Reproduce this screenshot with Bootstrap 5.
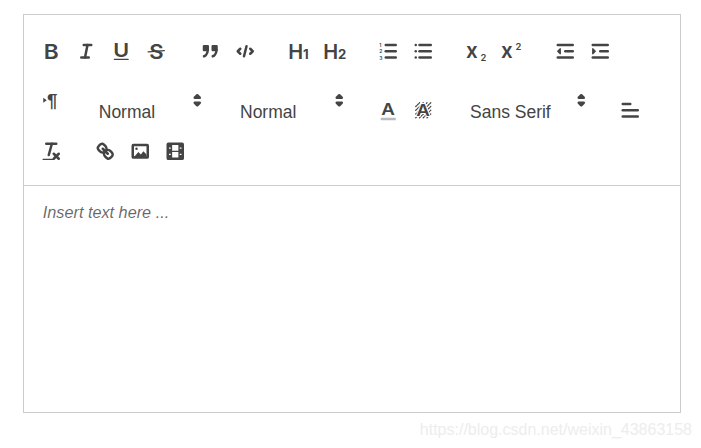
<!DOCTYPE html>
<html lang="en">

<head>
    <meta charset="UTF-8">
    <meta name="viewport" content="width=device-width, initial-scale=1.0">
    <title>Editor</title>
    <link rel="stylesheet" href="https://cdn.jsdelivr.net/npm/bootstrap@5.3.3/dist/css/bootstrap.min.css">
    <style>
        body { background: #fff; font-family: "Liberation Sans", Arial, sans-serif; color: #444; }
        .editor-box { margin: 14px 0 0 23px; width: 658px; border: 1px solid #ccc; }
        .tool-bar { padding: 11px 10px 9px; border-bottom: 1px solid #ccc; }
        .tool-group { height: 50px; margin-right: 18.75px; }
        .tool-btn { width: 35px; height: 30px; padding: 3.75px 6.25px; background: none; border: 0; overflow: visible; }
        .tool-btn svg { display: block; width: 22.5px; height: 22.5px; overflow: visible; }
        .tool-btn.up { margin-bottom: 2px; }
        .tool-btn.down { margin-top: 18px; }
        .tool-picker { width: 122.5px; height: 50px; font-size: 17.5px; padding: 0 1.5px 0 11px; }
        .tool-picker.wide { width: 135px; }
        .tool-picker span { margin-top: 25px; line-height: 22px; }
        .tool-picker svg { width: 22.5px; height: 22.5px; margin-top: 13px; }
        svg text { font-family: Inter, "Liberation Sans", sans-serif; font-weight: 600; fill: #444; }
        .ln { fill: none; stroke: #444; stroke-width: 2; stroke-linecap: round; stroke-linejoin: round; }
        .thin { stroke-width: 1; }
        .dark { fill: #444; }
        .halo { paint-order: stroke; stroke: #fff; stroke-width: 1.5px; }
        .editor-area { height: 226px; padding: 15px 18.75px; font-size: 16.25px; line-height: 23px; font-style: italic; color: rgba(0, 0, 0, .6); }
        .water-mark { width: 692px; margin-top: 8px; font-size: 16px; line-height: 18px; color: #ededed; }
    </style>
</head>

<body>
    <div class="editor-box">
        <div class="tool-bar d-flex flex-wrap">
            <div class="tool-group d-flex align-items-center">
                <button class="tool-btn"><svg viewBox="0 0 18 18"><text transform="translate(3 15) scale(1.1 1)" font-size="16.5">B</text></svg></button>
                <button class="tool-btn"><svg viewBox="0 0 18 18"><line class="ln" x1="7" x2="13" y1="4" y2="4"/><line class="ln" x1="5" x2="11" y1="14" y2="14"/><line class="ln" x1="8" x2="10" y1="14" y2="4"/></svg></button>
                <button class="tool-btn"><svg viewBox="0 0 18 18"><text transform="translate(2.6 13.6) scale(1.15 1)" font-size="15">U</text><rect class="dark" x="3" y="15" width="12" height="1" rx=".5"/></svg></button>
                <button class="tool-btn"><svg viewBox="0 0 18 18"><text transform="translate(3.4 15) scale(1.1 1)" font-size="16">S</text><line class="ln thin" x1="15.5" x2="2.5" y1="8.5" y2="9.5"/></svg></button>
            </div>
            <div class="tool-group d-flex align-items-center">
                <button class="tool-btn"><svg viewBox="0 0 18 18"><rect class="dark ln" x="4" y="5" width="3" height="3"/><rect class="dark ln" x="11" y="5" width="3" height="3"/><path class="ln" d="M7,8c0,4-3,5-3,5"/><path class="ln" d="M14,8c0,4-3,5-3,5"/></svg></button>
                <button class="tool-btn"><svg viewBox="0 0 18 18"><polyline class="ln" points="5 7 3 9 5 11"/><polyline class="ln" points="13 7 15 9 13 11"/><line class="ln" x1="10" x2="8" y1="5" y2="13"/></svg></button>
            </div>
            <div class="tool-group d-flex align-items-center">
                <button class="tool-btn"><svg viewBox="0 0 18 18"><text x=".1" y="15" font-size="16">H<tspan font-size="10.5" font-weight="700">1</tspan></text></svg></button>
                <button class="tool-btn"><svg viewBox="0 0 18 18"><text x=".1" y="15" font-size="16">H<tspan font-size="10.5" font-weight="700">2</tspan></text></svg></button>
            </div>
            <div class="tool-group d-flex align-items-center">
                <button class="tool-btn"><svg viewBox="0 0 18 18"><line class="ln" x1="7" x2="15" y1="4" y2="4"/><line class="ln" x1="7" x2="15" y1="9" y2="9"/><line class="ln" x1="7" x2="15" y1="14" y2="14"/><text x="1.8" y="5.6" font-size="4" font-weight="700">1</text><text x="1.8" y="10.6" font-size="4" font-weight="700">2</text><text x="1.8" y="15.6" font-size="4" font-weight="700">3</text></svg></button>
                <button class="tool-btn"><svg viewBox="0 0 18 18"><line class="ln" x1="6" x2="15" y1="4" y2="4"/><line class="ln" x1="6" x2="15" y1="9" y2="9"/><line class="ln" x1="6" x2="15" y1="14" y2="14"/><line class="ln" x1="3" x2="3" y1="4" y2="4"/><line class="ln" x1="3" x2="3" y1="9" y2="9"/><line class="ln" x1="3" x2="3" y1="14" y2="14"/></svg></button>
            </div>
            <div class="tool-group d-flex align-items-center">
                <button class="tool-btn"><svg viewBox="0 0 18 18"><text x=".8" y="14.6" font-size="16.5" font-weight="700">x</text><text x="12.4" y="16.6" font-size="7.5" font-weight="400">2</text></svg></button>
                <button class="tool-btn"><svg viewBox="0 0 18 18"><text x=".8" y="14.6" font-size="16.5" font-weight="700">x</text><text x="12.4" y="8" font-size="7.5" font-weight="400">2</text></svg></button>
            </div>
            <div class="tool-group d-flex align-items-center">
                <button class="tool-btn"><svg viewBox="0 0 18 18"><line class="ln" x1="3" x2="15" y1="14" y2="14"/><line class="ln" x1="3" x2="15" y1="4" y2="4"/><line class="ln" x1="9" x2="15" y1="9" y2="9"/><polyline class="ln dark thin" points="5 7 5 11 3 9 5 7"/></svg></button>
                <button class="tool-btn"><svg viewBox="0 0 18 18"><line class="ln" x1="3" x2="15" y1="14" y2="14"/><line class="ln" x1="3" x2="15" y1="4" y2="4"/><line class="ln" x1="9" x2="15" y1="9" y2="9"/><polyline class="ln dark thin" points="3 7 3 11 5 9 3 7"/></svg></button>
            </div>

            <div class="tool-group d-flex align-items-center">
                <button class="tool-btn up"><svg viewBox="0 0 18 18"><polygon class="dark" points="2.6 7 2.6 11 5.4 9"/><text x="5.6" y="14.6" font-size="15" style="font-family:'Liberation Sans',sans-serif;font-weight:700">¶</text></svg></button>
            </div>
            <div class="tool-group tool-picker d-flex justify-content-between align-items-start">
                <span>Normal</span>
                <svg viewBox="0 0 18 18"><polygon class="ln dark" points="7 11 9 13 11 11 7 11"/><polygon class="ln dark" points="7 7 9 5 11 7 7 7"/></svg>
            </div>
            <div class="tool-group tool-picker d-flex justify-content-between align-items-start">
                <span>Normal</span>
                <svg viewBox="0 0 18 18"><polygon class="ln dark" points="7 11 9 13 11 11 7 11"/><polygon class="ln dark" points="7 7 9 5 11 7 7 7"/></svg>
            </div>
            <div class="tool-group d-flex align-items-center">
                <button class="tool-btn down"><svg viewBox="0 0 18 18"><text transform="translate(3.4 12.8) scale(1.15 1)" font-size="13" font-weight="700">A</text><rect x="3" y="15" width="12" height="2" fill="#bbb"/></svg></button>
                <button class="tool-btn down"><svg viewBox="0 0 18 18"><g class="ln thin" stroke-dasharray="1 1"><line x1="3" x2="6" y1="6" y2="3"/><line x1="3" x2="9" y1="9" y2="3"/><line x1="3" x2="12" y1="12" y2="3"/><line x1="3" x2="15" y1="15" y2="3"/><line x1="6" x2="15" y1="15" y2="6"/><line x1="9" x2="15" y1="15" y2="9"/><line x1="12" x2="15" y1="15" y2="12"/></g><text class="halo" transform="translate(3.4 13.6) scale(1.15 1)" font-size="13" font-weight="700">A</text></svg></button>
            </div>
            <div class="tool-group tool-picker wide d-flex justify-content-between align-items-start">
                <span>Sans Serif</span>
                <svg viewBox="0 0 18 18"><polygon class="ln dark" points="7 11 9 13 11 11 7 11"/><polygon class="ln dark" points="7 7 9 5 11 7 7 7"/></svg>
            </div>
            <div class="tool-group d-flex align-items-center">
                <button class="tool-btn down"><svg viewBox="0 0 18 18"><line class="ln" x1="3" x2="15" y1="9" y2="9"/><line class="ln" x1="3" x2="15" y1="14" y2="14"/><line class="ln" x1="3" x2="9" y1="4" y2="4"/></svg></button>
            </div>

            <div class="tool-group d-flex align-items-center">
                <button class="tool-btn"><svg viewBox="0 0 18 18"><line class="ln" x1="5" x2="13" y1="3" y2="3"/><line class="ln" x1="9.5" x2="7" y1="3" y2="12"/><line class="ln thin" x1="2.5" x2="10" y1="15.5" y2="15.5"/><line class="ln" x1="11" x2="15" y1="11" y2="15"/><line class="ln" x1="15" x2="11" y1="11" y2="15"/></svg></button>
            </div>
            <div class="tool-group d-flex align-items-center">
                <button class="tool-btn"><svg viewBox="0 0 18 18"><line class="ln" x1="7" x2="11" y1="7" y2="11"/><path class="ln" d="M8.9,4.577a3.476,3.476,0,0,1,.36,4.679A3.476,3.476,0,0,1,4.577,8.9C3.185,7.5,2.035,6.4,4.217,4.217S7.5,3.185,8.9,4.577Z"/><path class="ln" d="M13.423,9.1a3.476,3.476,0,0,0-4.679-.36,3.476,3.476,0,0,0,.36,4.679c1.392,1.392,2.5,2.542,4.679.36S14.815,10.5,13.423,9.1Z"/></svg></button>
                <button class="tool-btn"><svg viewBox="0 0 18 18"><rect class="ln" x="3" y="4" width="12" height="10" rx=".5"/><circle class="dark" cx="6" cy="7" r="1"/><polygon class="dark" points="4 13.5 7.5 9.5 9.5 11.5 11.5 9 14 11.5 14 13.5"/></svg></button>
                <button class="tool-btn"><svg viewBox="0 0 18 18"><rect class="ln" x="3" y="3" width="12" height="12" rx=".5"/><rect class="dark" x="3" y="3" width="3.5" height="12"/><rect class="dark" x="11.5" y="3" width="3.5" height="12"/><line class="ln thin" x1="6" x2="12" y1="9" y2="9"/><rect fill="#fff" x="4" y="6" width="1.4" height="1"/><rect fill="#fff" x="4" y="11" width="1.4" height="1"/><rect fill="#fff" x="12.6" y="6" width="1.4" height="1"/><rect fill="#fff" x="12.6" y="11" width="1.4" height="1"/></svg></button>
            </div>
        </div>
        <div class="editor-area">Insert text here ...</div>
    </div>
    <div class="water-mark text-end">https://blog.csdn.net/weixin_43863158</div>

    <script src="https://cdn.jsdelivr.net/npm/bootstrap@5.3.3/dist/js/bootstrap.bundle.min.js"></script>
</body>

</html>
